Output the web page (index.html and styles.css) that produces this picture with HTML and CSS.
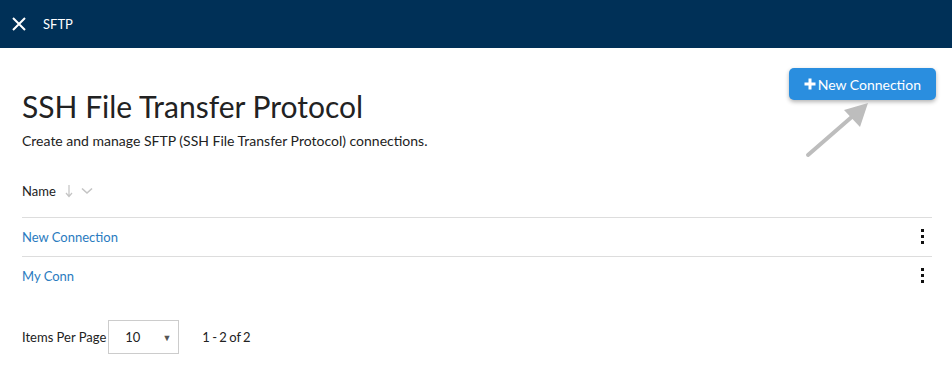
FILE: index.html
```html
<!DOCTYPE html>
<html>
<head>
<meta charset="utf-8">
<link rel="stylesheet" href="styles.css">
</head>
<body>
<header class="topbar">
  <svg class="close" width="14" height="14" viewBox="0 0 14 14"><path d="M1 1L13 13M13 1L1 13" stroke="#fff" stroke-width="2"/></svg>
  <span class="topbar-title">SFTP</span>
</header>
<main class="page">
  <div class="intro">
    <div class="intro-text">
      <h1 class="title">SSH File Transfer Protocol</h1>
      <p class="subtitle">Create and manage SFTP (SSH File Transfer Protocol) connections.</p>
    </div>
    <button class="btn-new"><svg class="plus" width="12" height="12" viewBox="0 0 12 12"><path d="M6 0.5V11.5M0.5 6H11.5" stroke="#fff" stroke-width="3"/></svg>New Connection</button>
    <svg class="pointer" width="70" height="60" viewBox="0 0 70 60"><path d="M4 55L50 15" stroke="#bdbdbd" stroke-width="4" stroke-linecap="round"/><path d="M64 3L40 10L56 27Z" fill="#bdbdbd"/></svg>
  </div>
  <div class="table">
    <div class="thead">
      <span class="th-name">Name</span>
      <svg class="sort" width="8" height="14" viewBox="0 0 8 14"><path d="M4 1V12M1 9L4 12.5L7 9" stroke="#c4c4c4" stroke-width="1.2" fill="none"/></svg>
      <svg class="chev" width="12" height="8" viewBox="0 0 12 8"><path d="M1 1.5L6 6L11 1.5" stroke="#c4c4c4" stroke-width="1.6" fill="none"/></svg>
    </div>
    <div class="row"><a class="link">New Connection</a><span class="kebab"><i></i><i></i><i></i></span></div>
    <div class="row"><a class="link">My Conn</a><span class="kebab"><i></i><i></i><i></i></span></div>
  </div>
  <div class="pager">
    <span class="pager-label">Items Per Page</span>
    <div class="select"><span>10</span><span class="caret">▼</span></div>
    <span class="pager-count">1 - 2 of 2</span>
  </div>
</main>
</body>
</html>
```
FILE: styles.css
```css
* { box-sizing: border-box; }
body { margin: 0; font-family: Lato, "Open Sans", sans-serif; color: #222; background: #fff; }
.topbar { height: 48px; background: #003057; display: flex; align-items: center; padding-left: 12px; }
.close { display: block; }
.topbar-title { color: #fff; font-size: 13px; margin-left: 17px; }
.page { padding: 0 20px 0 22px; }
.intro { position: relative; display: flex; justify-content: space-between; align-items: flex-start; }
.title { margin: 40px 0 0; font-size: 30px; font-weight: 400; line-height: 36px; color: #222; }
.subtitle { margin: 8px 0 0; font-size: 14px; line-height: 18px; color: #222; }
.btn-new { margin-top: 20px; margin-right: -4px; height: 32px; padding: 0 15px 0 15px; border: none; border-radius: 5px; background: #2a8edf; color: #fff; font-family: inherit; font-size: 14px; display: flex; align-items: center; gap: 2px; box-shadow: 0 2px 4px rgba(0,0,0,0.3); }
.plus { display: block; }
.pointer { position: absolute; right: 58px; top: 52px; }
.table { margin-top: 27px; }
.thead { display: flex; align-items: center; height: 41px; border-bottom: 1px solid #ddd; padding-bottom: 12px; font-size: 13px; }
.sort { margin-left: 9px; }
.chev { margin-left: 8px; }
.row { display: flex; align-items: center; justify-content: space-between; height: 39px; padding-bottom: 1px; border-bottom: 1px solid #ddd; font-size: 13px; }
.row:last-child { border-bottom-color: transparent; }
.link { color: #2a7bc0; }
.kebab { display: flex; flex-direction: column; gap: 3px; margin-right: 8px; }
.kebab i { width: 3px; height: 3px; background: #111; display: block; }
.pager { display: flex; align-items: center; margin-top: 24px; font-size: 13px; }
.select { margin-left: 2px; width: 71px; height: 34px; border: 1px solid #ccc; display: flex; align-items: center; justify-content: space-between; padding: 0 7px 0 16px; font-size: 13px; color: #222; }
.caret { font-size: 9px; color: #555; }
.pager-count { margin-left: 23px; word-spacing: -1px; }
```
